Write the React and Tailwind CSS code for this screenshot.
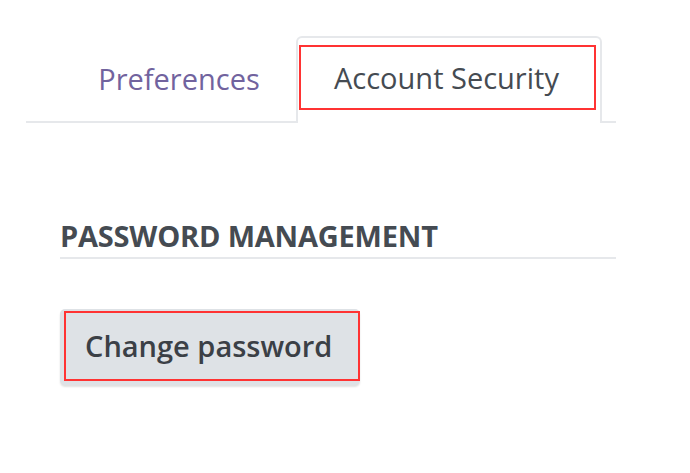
import React from 'react';

const App = () => {
  return (
    <div className="w-[690px] h-[473px] bg-white font-['Open_Sans',sans-serif] overflow-hidden">
      {/* Tabs */}
      <div className="pt-[36px] pl-[26px] w-[616px]">
        <div className="flex items-end border-b-2 border-[#e6e8eb] pl-[36px]">
          <div className="w-[234px] h-[85px] flex items-center justify-center text-[29px] text-[#71639e]">
            Preferences
          </div>
          <div className="-mb-[2px] w-[306px] h-[87px] bg-white border-2 border-b-0 border-[#e6e8eb] rounded-t-[6px] pl-[1px] pt-[7px]">
            <div className="w-[297px] h-[65px] border-2 border-[#ff3333] pl-[33px] flex items-center text-[29px] text-[#454b52] whitespace-nowrap">
              Account Security
            </div>
          </div>
        </div>
      </div>

      {/* Section */}
      <div className="pl-[60px] w-[616px] pt-[94px]">
        <div className="border-b-2 border-[#e6e8eb] pb-[2px]">
          <h2 className="text-[29px] font-bold text-[#454b52] tracking-[-0.2px] leading-[38px] whitespace-nowrap">
            PASSWORD MANAGEMENT
          </h2>
        </div>
        <button className="mt-[50px] w-[300px] h-[76px] rounded-[5px] bg-[#dee2e6] shadow-[0_2px_2px_rgba(0,0,0,0.12)] pl-[4px] pt-[2px] pb-[4px]">
          <div className="h-full border-2 border-[#ff3333] flex items-center pl-[19px] text-[29px] font-semibold text-[#3b4046] whitespace-nowrap">
            Change password
          </div>
        </button>
      </div>
    </div>
  );
};

export default App;
